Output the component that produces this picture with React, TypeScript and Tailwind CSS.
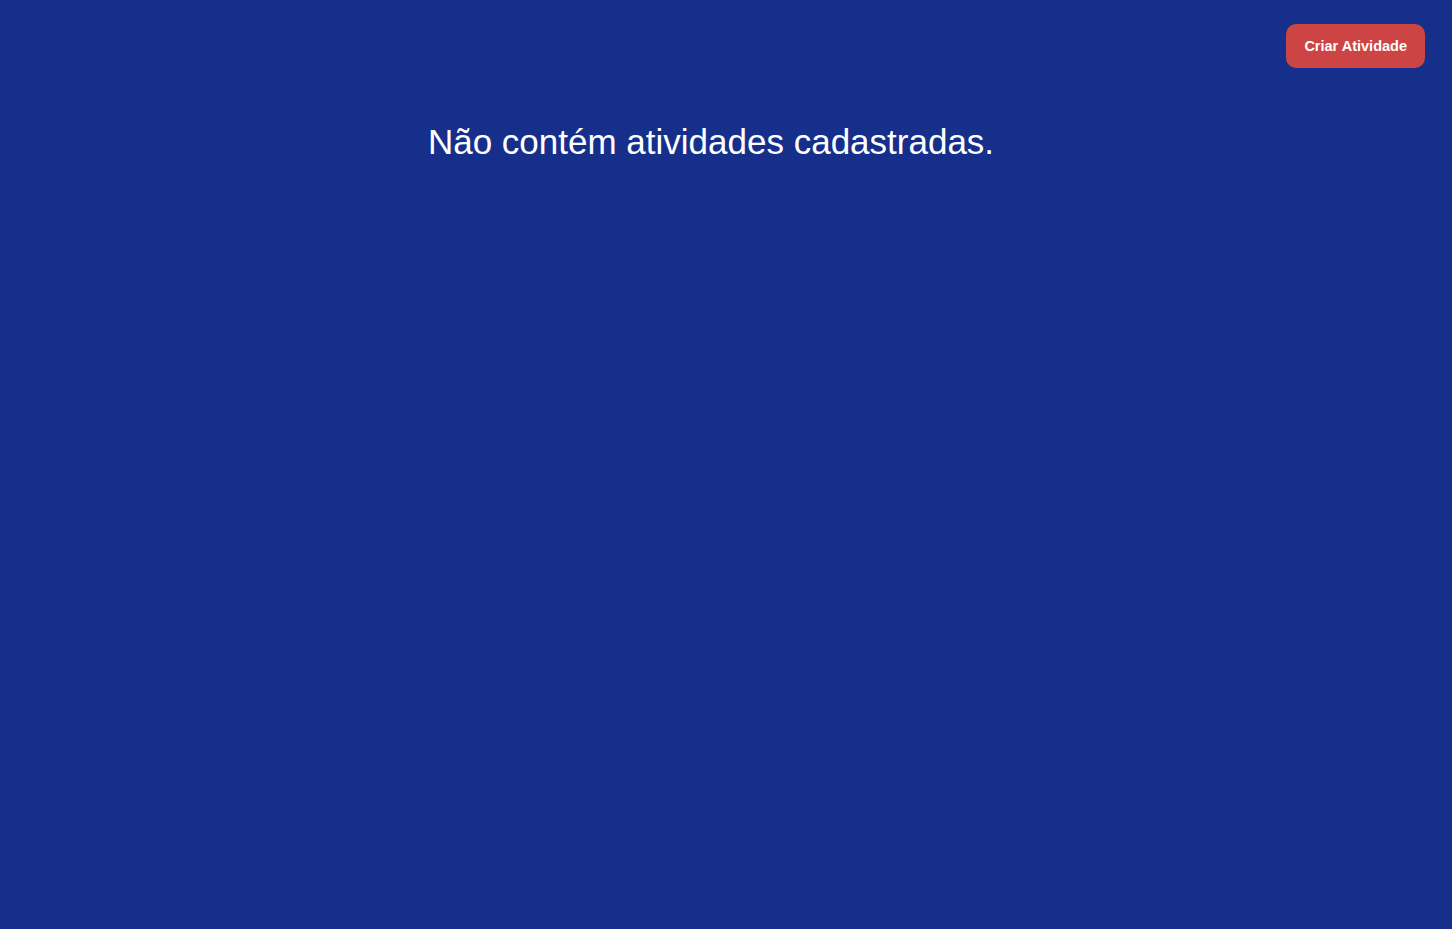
import React from "react";

function App() {
  return (
    <main
      className="min-h-screen w-full bg-[#162f8b] flex flex-col"
      style={{ fontFamily: '"Liberation Sans", Arial, sans-serif' }}
    >
      <div className="flex justify-end pt-6 pr-[27px]">
        <button className="h-11 px-[18px] pt-px rounded-[10px] bg-[#cc4444] text-white text-[14.5px] font-bold">
          Criar Atividade
        </button>
      </div>
      <h1 className="mt-[54px] pr-[30px] text-center text-[35px] leading-[1.15] text-white">
        Não contém atividades cadastradas.
      </h1>
    </main>
  );
}

export default App;
